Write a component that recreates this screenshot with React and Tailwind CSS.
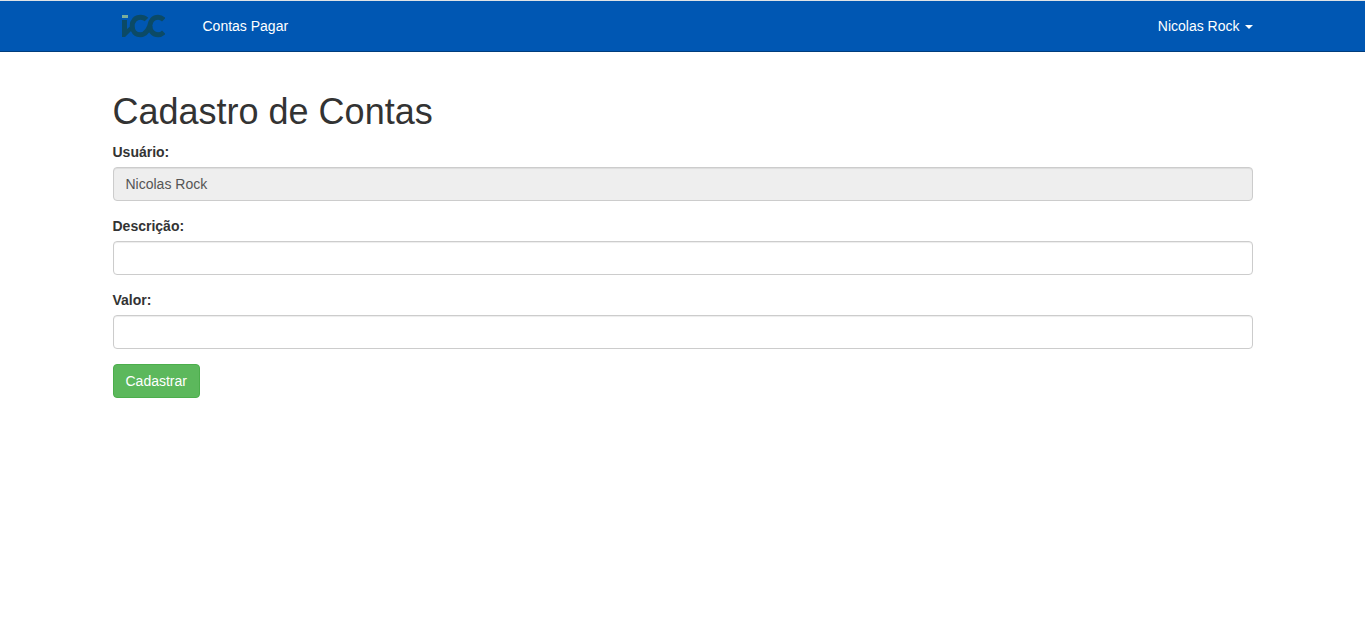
import { useState } from "react";

function Logo() {
  return (
    <svg viewBox="0 0 44 24" className="h-6 w-11" role="img" aria-label="ICC">
      <path d="M1 1h6v3H1z" fill="#7cae9b" />
      <path d="M1 6h5v9l5-4v5l-7 7H1z" fill="#0b4a66" />
      <g fill="none" stroke="#0b4a66" strokeWidth="5" strokeLinejoin="round">
        <path d="M25.5 5.6C23.5 3.6 21.5 3.2 19.5 3.2C14.5 3.2 11.2 7 11.2 12C11.2 17 14.5 20.8 19.5 20.8C22.5 20.8 24.5 19 26 17C27.5 15 28 13.5 28.7 12C29.2 7 32.5 3.2 37 3.2C39.5 3.2 41 4 42.8 5.8" />
        <path d="M28.9 12C28.9 17 32.5 20.8 37 20.8C39.5 20.8 41 20 42.8 18.2" />
      </g>
    </svg>
  );
}

function Field({ id, label, ...props }) {
  return (
    <div className="mb-[15px]">
      <label htmlFor={id} className="mb-[5px] block w-fit font-bold">
        {label}
      </label>
      <input
        id={id}
        type="text"
        className="block h-[34px] w-full rounded-[4px] border border-[#ccc] bg-white px-3 py-1.5 text-[#555] shadow-[inset_0_1px_1px_rgba(0,0,0,0.075)] outline-none focus:border-[#66afe9] read-only:bg-[#eee]"
        {...props}
      />
    </div>
  );
}

export default function App() {
  const [description, setDescription] = useState("");
  const [amount, setAmount] = useState("");

  return (
    <div className="bg-white font-['Liberation_Sans',Arial,sans-serif] text-[14px] leading-5 text-[#333]">
      <header className="border-t border-b border-t-[#dfe3e6] border-b-[#003d7c] bg-[#0057b3] text-white">
        <nav className="mx-auto flex h-[50px] max-w-[1170px] items-center px-[15px]">
          <a href="#" className="ml-2">
            <Logo />
          </a>
          <a href="#" className="ml-[38px]">
            Contas Pagar
          </a>
          <button type="button" className="ml-auto flex items-center gap-[5px]">
            Nicolas Rock
            <svg viewBox="0 0 8 4" className="mt-0.5 h-1 w-2" aria-hidden="true">
              <path d="M0 0h8L4 4z" fill="currentColor" />
            </svg>
          </button>
        </nav>
      </header>
      <main className="mx-auto max-w-[1170px] px-[15px] pt-10 pb-5">
        <h1 className="mb-2.5 text-[36px] leading-10 font-medium">Cadastro de Contas</h1>
        <form onSubmit={(event) => event.preventDefault()}>
          <Field id="usuario" label="Usuário:" value="Nicolas Rock" readOnly />
          <Field
            id="descricao"
            label="Descrição:"
            value={description}
            onChange={(event) => setDescription(event.target.value)}
          />
          <Field
            id="valor"
            label="Valor:"
            value={amount}
            onChange={(event) => setAmount(event.target.value)}
          />
          <button
            type="submit"
            className="h-[34px] rounded-[4px] border border-[#4cae4c] bg-[#5cb85c] px-3 text-white hover:bg-[#449d44]"
          >
            Cadastrar
          </button>
        </form>
      </main>
    </div>
  );
}
